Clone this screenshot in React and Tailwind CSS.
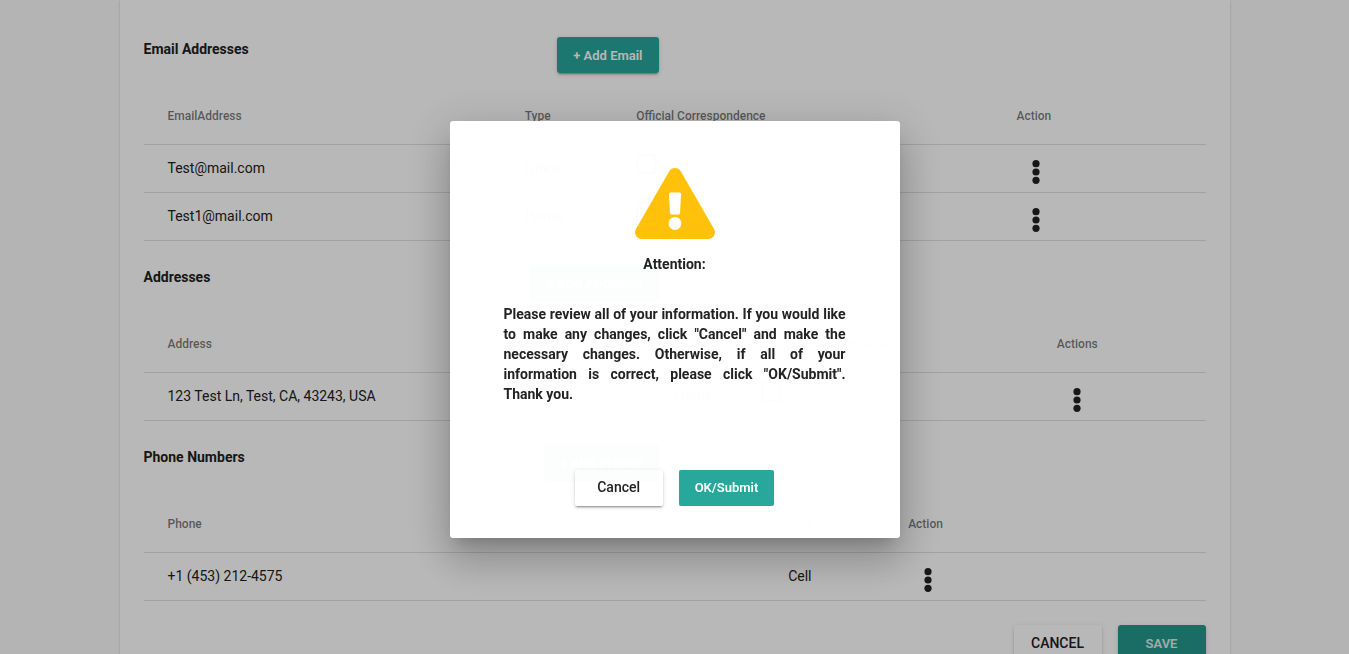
import { FaExclamationTriangle } from "react-icons/fa";

const RAISED =
  "shadow-[0_3px_1px_-2px_rgba(0,0,0,0.2),0_2px_2px_rgba(0,0,0,0.14),0_1px_5px_rgba(0,0,0,0.12)]";

function AddButton({ children }) {
  return (
    <button
      type="button"
      className={`h-9 rounded-[3px] bg-[#26a69a] px-4 pt-0.5 text-[13px] font-semibold text-white ${RAISED}`}
    >
      {children}
    </button>
  );
}

function RowMenu({ label }) {
  return (
    <button
      type="button"
      aria-label={`Actions for ${label}`}
      className="flex h-10 w-10 items-center justify-center pt-2"
    >
      <svg viewBox="0 0 8 24" className="h-6 w-2 fill-[#212121]" aria-hidden="true">
        <circle cx="4" cy="3.7" r="3.6" />
        <circle cx="4" cy="12" r="3.6" />
        <circle cx="4" cy="20.3" r="3.6" />
      </svg>
    </button>
  );
}

function Check({ label }) {
  return (
    <input
      type="checkbox"
      aria-label={`Official correspondence: ${label}`}
      className="mb-2 block h-5 w-5 appearance-none rounded-[2px] border-2 border-black/54"
    />
  );
}

function Section({ title, action, columns, rows }) {
  return (
    <section className="pb-6">
      <div className="mb-4 flex w-1/2 items-start justify-between pr-4">
        <h2 className="text-sm leading-6 font-bold">{title}</h2>
        <AddButton>{action}</AddButton>
      </div>
      <table className="w-full table-fixed border-separate border-spacing-0 text-left">
        <thead>
          <tr>
            {columns.map(([name, width]) => (
              <th
                key={name}
                scope="col"
                className={`h-14 border-b border-black/12 p-0 pb-0.5 text-xs font-medium text-black/54 first:pl-6 ${width}`}
              >
                {name}
              </th>
            ))}
          </tr>
        </thead>
        <tbody>
          {rows.map((row) => (
            <tr key={row[0]}>
              {row.map((cell, i) => (
                <td
                  key={i}
                  className="h-12 border-b border-black/12 p-0 pb-0.5 text-sm whitespace-nowrap first:pl-6"
                >
                  {cell}
                </td>
              ))}
            </tr>
          ))}
        </tbody>
      </table>
    </section>
  );
}

function Dialog() {
  return (
    <div className="fixed inset-0 flex items-center justify-center bg-black/28 pt-[5px]">
      <div
        role="dialog"
        aria-modal="true"
        aria-labelledby="dialog-title"
        aria-describedby="dialog-text"
        className="w-full max-w-[450px] rounded-[3px] bg-white px-[54px] pt-[47px] pb-8 opacity-99 shadow-[0_11px_15px_-7px_rgba(0,0,0,0.2),0_24px_38px_3px_rgba(0,0,0,0.14),0_9px_46px_8px_rgba(0,0,0,0.12)]"
      >
        <FaExclamationTriangle className="mx-auto block h-[71px] w-20 text-[#ffc107]" aria-hidden="true" />
        <h2 id="dialog-title" className="mt-[15px] text-center text-sm leading-5 font-bold">
          Attention:
        </h2>
        <p id="dialog-text" className="mt-[30px] text-justify text-sm leading-5 font-bold">
          Please review all of your information. If you would like to make any changes, click
          "Cancel" and make the necessary changes. Otherwise, if all of your information is
          correct, please click "OK/Submit". Thank you.
        </p>
        <div className="mt-[66px] flex justify-center gap-4">
          <button
            type="button"
            className={`h-9 min-w-[88px] rounded-[2px] bg-white px-4 pb-0.5 text-sm font-medium ${RAISED}`}
          >
            Cancel
          </button>
          <button
            type="button"
            className="h-9 min-w-[88px] rounded-[2px] bg-[#26a69a] px-4 text-[13px] font-semibold text-white"
          >
            OK/Submit
          </button>
        </div>
      </div>
    </div>
  );
}

export default function App() {
  return (
    <div className="h-screen overflow-hidden bg-[#fafafa] font-[Roboto,'Liberation_Sans',sans-serif] text-[#212121]">
      <main className="mx-auto max-w-[1110px] bg-white px-6 pt-[37px] pb-6 shadow-[0_2px_1px_-1px_rgba(0,0,0,0.2),0_1px_1px_rgba(0,0,0,0.14),0_1px_3px_rgba(0,0,0,0.12)]">
        <Section
          title="Email Addresses"
          action="+ Add Email"
          columns={[
            ["EmailAddress", "w-[35.9%]"],
            ["Type", "w-[10.5%]"],
            ["Official Correspondence", "w-[35.8%]"],
            ["Action", "w-auto"],
          ]}
          rows={[
            ["Test@mail.com", "Office", <Check label="Test@mail.com" />, <RowMenu label="Test@mail.com" />],
            ["Test1@mail.com", "Home", <Check label="Test1@mail.com" />, <RowMenu label="Test1@mail.com" />],
          ]}
        />
        <Section
          title="Addresses"
          action="+ ADD ADDRESS"
          columns={[
            ["Address", "w-[50%]"],
            ["Type", "w-[8.1%]"],
            ["Official Correspondence", "w-[27.9%]"],
            ["Actions", "w-auto"],
          ]}
          rows={[
            [
              "123 Test Ln, Test, CA, 43243, USA",
              "Home",
              <Check label="123 Test Ln" />,
              <RowMenu label="123 Test Ln" />,
            ],
          ]}
        />
        <Section
          title="Phone Numbers"
          action="+ ADD PHONE"
          columns={[
            ["Phone", "w-[60.7%]"],
            ["Type", "w-[11.3%]"],
            ["Action", "w-auto"],
          ]}
          rows={[["+1 (453) 212-4575", "Cell", <RowMenu label="+1 (453) 212-4575" />]]}
        />
        <div className="flex justify-end gap-4">
          <button
            type="button"
            className={`h-9 min-w-[88px] rounded-[3px] bg-white px-4 text-sm font-medium ${RAISED}`}
          >
            CANCEL
          </button>
          <button
            type="button"
            className={`h-9 min-w-[88px] rounded-[3px] bg-[#24978c] px-4 pt-0.5 text-[13px] font-semibold text-white/85 ${RAISED}`}
          >
            SAVE
          </button>
        </div>
      </main>
      <Dialog />
    </div>
  );
}
